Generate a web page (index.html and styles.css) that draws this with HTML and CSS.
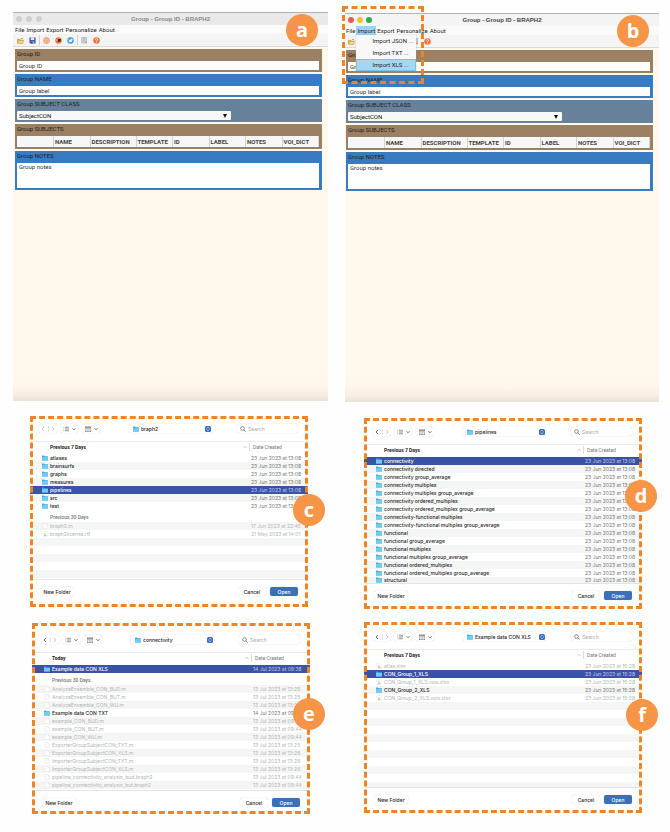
FILE: index.html
```html
<!DOCTYPE html>
<html lang="en">
<head>
<meta charset="utf-8">
<title>Group - Group ID - BRAPH2</title>
<link rel="stylesheet" href="styles.css">
</head>
<body>
<svg class="defs" aria-hidden="true">
  <symbol id="folder" viewBox="0 0 12 12"><path d="M0 2.2Q0 1 1.2 1H4l1.2 1.4h5.6q1.2 0 1.2 1.2V10q0 1-1 1H1q-1 0-1-1z" fill="#41a9dd"/><path d="M0 4h12v6q0 1-1 1H1q-1 0-1-1z" fill="#6dccf5"/></symbol>
  <symbol id="file" viewBox="0 0 12 12"><path d="M2 .5h5.500l3 3v8H2z" fill="#fff" stroke="#dedede"/><path d="M7.500.5v3h3" fill="none" stroke="#dedede"/></symbol>
  <symbol id="sheet" viewBox="0 0 12 12"><path d="M2 .5h5.500l3 3v8H2z" fill="#fff" stroke="#e2e2e2"/><path d="M4 5h4v2H4z" fill="#e0b868"/><path d="M4 8h5v2H4z" fill="#b7c8b2"/></symbol>
  <symbol id="back" viewBox="0 0 10 12"><path d="M7 2 3 6l4 4" fill="none" stroke="currentColor" stroke-width="1.600"/></symbol>
  <symbol id="forward" viewBox="0 0 10 12"><path d="m3 2 4 4-4 4" fill="none" stroke="currentColor" stroke-width="1.600"/></symbol>
  <symbol id="list" viewBox="0 0 12 12"><path d="M1 2.500h1.500M4 2.500h8M1 6h1.500M4 6h8M1 9.500h1.500M4 9.500h8" stroke="#666" stroke-width="1.400"/></symbol>
  <symbol id="tiles" viewBox="0 0 12 12"><path d="M0 1h12v4H0zM0 7h3v2H0zm4.500 0h3v2h-3zM9 7h3v2H9zM0 10h3v2H0zm4.500 0h3v2h-3zM9 10h3v2H9z" fill="#858585"/><path d="M4 1v4m4-4v4" stroke="#ccc"/></symbol>
  <symbol id="down" viewBox="0 0 8 8"><path d="m1 2.500 3 3 3-3" fill="none" stroke="#444" stroke-width="1.600"/></symbol>
  <symbol id="updown" viewBox="0 0 12 12"><rect width="12" height="12" rx="3" fill="#3c6fc0"/><path d="m3.500 5 2.500-2.500L8.500 5m-5 2L6 9.500 8.500 7" fill="none" stroke="#fff" stroke-width="1.300"/></symbol>
  <symbol id="lens" viewBox="0 0 12 12"><circle cx="5" cy="5" r="3.700" fill="none" stroke="#555" stroke-width="1.300"/><path d="m7.700 7.700 3.500 3.500" stroke="#555" stroke-width="1.500"/></symbol>
  <symbol id="up" viewBox="0 0 8 8"><path d="m1 5.500 3-3 3 3" fill="none" stroke="#888"/></symbol>
  <symbol id="open" viewBox="0 0 16 16"><path d="M1 5h5l1 2h6v7H1z" fill="#e0b63c" stroke="#a88220"/><path d="m1 14 3-6h11l-2 6z" fill="#fbe48a" stroke="#b08c28"/><path d="M9 4q3-3 5 1" fill="none" stroke="#667" stroke-width="1.300"/></symbol>
  <symbol id="save" viewBox="0 0 16 16"><path d="M1 1h14v14H3l-2-2z" fill="#4350a8"/><path d="M4 1h8v6H4z" fill="#e8eefc"/><path d="M4 10h8v5H4z" fill="#a9b0c4"/><path d="M5 11h3v4H5z" fill="#222a60"/></symbol>
  <symbol id="globe" viewBox="0 0 16 16"><circle cx="8" cy="8" r="7" fill="#fbd9c4" stroke="#ee8f5c" stroke-width="1.600"/><path d="M1 8h14M8 1v14M2.500 4.500h11m-11 7h11M8 1Q1 8 8 15M8 1q7 7 0 14" fill="none" stroke="#ee8f5c"/></symbol>
  <symbol id="forum" viewBox="0 0 16 16"><circle cx="8" cy="8" r="7.500" fill="#ee7c3a"/><path d="M7 4.500h6V10H9l-3 2V7z" fill="#4a2013"/><circle cx="5" cy="7" r="1.500" fill="#ffd9bd"/></symbol>
  <symbol id="bird" viewBox="0 0 16 16"><circle cx="8" cy="8" r="7.500" fill="#3a9be0"/><path d="M3 4.500q2 2.500 5 2.500.2-3 2.500-3 1 0 1.500.8l1.200-.5-.7 1.500q0 6-5.500 6-2.500 0-4-1.200 2 0 3-1-2-.5-2.300-2z" fill="#fff"/></symbol>
  <symbol id="notes" viewBox="0 0 16 16"><path d="M1.500 1h11v13h-11z" fill="#dcdce2" stroke="#85828c"/><path d="M4 4h6M4 7h6M4 10h4" stroke="#8c8290"/><path d="m9 10 5 1-2 4z" fill="#ee7c3a"/></symbol>
  <symbol id="help" viewBox="0 0 16 16"><circle cx="8" cy="8" r="7.500" fill="#ee7440"/><path d="M5.500 6q0-2.500 2.500-2.500T10.500 6Q10.500 7.500 8 8.500V10m0 1.200V13" fill="none" stroke="#fff" stroke-width="1.600"/></symbol>
</svg>

<main class="sheet">
<div class="column">

<section class="window window-a" aria-label="Group editor">
  <header class="titlebar inactive"><span class="lights"><i></i><i></i><i></i></span><h1>Group - Group ID - BRAPH2</h1></header>
  <nav class="menubar"><button>File</button><button>Import</button><button>Export</button><button>Personalize</button><button>About</button></nav>
  <div class="toolbar">
    <button aria-label="Open"><svg><use href="#open"/></svg></button><button aria-label="Save"><svg><use href="#save"/></svg></button><hr>
    <button aria-label="Website"><svg><use href="#globe"/></svg></button><button aria-label="Forum"><svg><use href="#forum"/></svg></button><button aria-label="Twitter"><svg><use href="#bird"/></svg></button><hr>
    <button aria-label="License"><svg><use href="#notes"/></svg></button><button aria-label="Help"><svg><use href="#help"/></svg></button>
  </div>
  <div class="panels">
    <div class="panel brown"><label for="a-id">Group ID</label><input id="a-id" value="Group ID"></div>
    <div class="panel blue"><label for="a-name">Group NAME</label><input id="a-name" value="Group label"></div>
    <div class="panel slate"><label for="a-class">Group SUBJECT CLASS</label><div class="select"><select id="a-class"><option>SubjectCON</option></select></div></div>
    <div class="panel brown"><span class="label">Group SUBJECTS</span>
      <table class="subjects"><colgroup><col><col><col class="wide"><col><col><col><col><col></colgroup><thead><tr><th></th><th>NAME</th><th>DESCRIPTION</th><th>TEMPLATE</th><th>ID</th><th>LABEL</th><th>NOTES</th><th>VOI_DICT</th></tr></thead></table></div>
    <div class="panel blue"><label for="a-notes">Group NOTES</label><textarea id="a-notes">Group notes</textarea></div>
  </div>
  <span class="badge badge-window">a</span>
</section>

<section class="dialog dialog-c" aria-label="Choose folder in braph2">
  <div class="bar">
    <div class="control nav"><button class="off" aria-label="Back"><svg><use href="#back"/></svg></button><button class="off" aria-label="Forward"><svg><use href="#forward"/></svg></button></div>
    <button class="control view" aria-label="List view"><svg><use href="#list"/></svg><svg class="small"><use href="#down"/></svg></button>
    <button class="control view" aria-label="Group by"><svg><use href="#tiles"/></svg><svg class="small"><use href="#down"/></svg></button>
    <div class="control place"><svg><use href="#folder"/></svg><select aria-label="Location"><option>braph2</option></select><svg><use href="#updown"/></svg></div>
    <div class="control search"><svg><use href="#lens"/></svg><input type="search" placeholder="Search" aria-label="Search"></div>
  </div>
  <div class="files">
    <table>
      <thead><tr><th>Previous 7 Days<svg><use href="#up"/></svg></th><th><span>Date Created</span></th></tr></thead>
      <tbody>
      <tr><td><svg><use href="#folder"/></svg>atlases</td><td>23 Jun 2023 at 13:08</td></tr>
      <tr class="alt"><td><svg><use href="#folder"/></svg>brainsurfs</td><td>23 Jun 2023 at 13:08</td></tr>
      <tr><td><svg><use href="#folder"/></svg>graphs</td><td>23 Jun 2023 at 13:08</td></tr>
      <tr class="alt"><td><svg><use href="#folder"/></svg>measures</td><td>23 Jun 2023 at 13:08</td></tr>
      <tr class="selected"><td><svg><use href="#folder"/></svg>pipelines</td><td>23 Jun 2023 at 13:08</td></tr>
      <tr class="alt"><td><svg><use href="#folder"/></svg>src</td><td>23 Jun 2023 at 13:08</td></tr>
      <tr><td><svg><use href="#folder"/></svg>test</td><td>23 Jun 2023 at 13:08</td></tr>
      <tr class="group"><th colspan="2">Previous 30 Days</th></tr>
      <tr class="alt dim"><td><svg><use href="#file"/></svg>braph2.m</td><td>17 Jun 2023 at 22:45</td></tr>
      <tr class="dim"><td><svg><use href="#sheet"/></svg>braph2license.rtf</td><td>21 May 2023 at 14:01</td></tr>
      </tbody>
    </table>
    <div class="empty"></div>
  </div>
  <div class="actions"><button class="control new">New Folder</button><button class="control">Cancel</button><button class="control primary">Open</button></div>
  <span class="badge badge-c">c</span>
</section>

<section class="dialog dialog-e" aria-label="Choose folder in connectivity">
  <div class="bar">
    <div class="control nav"><button aria-label="Back"><svg><use href="#back"/></svg></button><button class="off" aria-label="Forward"><svg><use href="#forward"/></svg></button></div>
    <button class="control view" aria-label="List view"><svg><use href="#list"/></svg><svg class="small"><use href="#down"/></svg></button>
    <button class="control view" aria-label="Group by"><svg><use href="#tiles"/></svg><svg class="small"><use href="#down"/></svg></button>
    <div class="control place"><svg><use href="#folder"/></svg><select aria-label="Location"><option>connectivity</option></select><svg><use href="#updown"/></svg></div>
    <div class="control search"><svg><use href="#lens"/></svg><input type="search" placeholder="Search" aria-label="Search"></div>
  </div>
  <div class="files">
    <table>
      <thead><tr><th>Today<svg><use href="#up"/></svg></th><th><span>Date Created</span></th></tr></thead>
      <tbody>
      <tr class="selected"><td><svg><use href="#folder"/></svg>Example data CON XLS</td><td>14 Jul 2023 at 09:38</td></tr>
      <tr class="group"><th colspan="2">Previous 30 Days</th></tr>
      <tr class="alt dim"><td><svg><use href="#file"/></svg>AnalyzeEnsemble_CON_BUD.m</td><td>13 Jul 2023 at 13:25</td></tr>
      <tr class="dim"><td><svg><use href="#file"/></svg>AnalyzeEnsemble_CON_BUT.m</td><td>13 Jul 2023 at 13:25</td></tr>
      <tr class="alt dim"><td><svg><use href="#file"/></svg>AnalyzeEnsemble_CON_WU.m</td><td>13 Jul 2023 at 13:25</td></tr>
      <tr><td><svg><use href="#folder"/></svg>Example data CON TXT</td><td>14 Jul 2023 at 09:38</td></tr>
      <tr class="alt dim"><td><svg><use href="#file"/></svg>example_CON_BUD.m</td><td>13 Jul 2023 at 09:44</td></tr>
      <tr class="dim"><td><svg><use href="#file"/></svg>example_CON_BUT.m</td><td>13 Jul 2023 at 09:44</td></tr>
      <tr class="alt dim"><td><svg><use href="#file"/></svg>example_CON_WU.m</td><td>13 Jul 2023 at 09:44</td></tr>
      <tr class="dim"><td><svg><use href="#file"/></svg>ExporterGroupSubjectCON_TXT.m</td><td>13 Jul 2023 at 13:25</td></tr>
      <tr class="alt dim"><td><svg><use href="#file"/></svg>ExporterGroupSubjectCON_XLS.m</td><td>13 Jul 2023 at 13:26</td></tr>
      <tr class="dim"><td><svg><use href="#file"/></svg>ImporterGroupSubjectCON_TXT.m</td><td>13 Jul 2023 at 13:26</td></tr>
      <tr class="alt dim"><td><svg><use href="#file"/></svg>ImporterGroupSubjectCON_XLS.m</td><td>13 Jul 2023 at 13:26</td></tr>
      <tr class="dim"><td><svg><use href="#file"/></svg>pipeline_connectivity_analysis_bud.braph2</td><td>13 Jul 2023 at 09:44</td></tr>
      <tr class="alt dim"><td><svg><use href="#file"/></svg>pipeline_connectivity_analysis_but.braph2</td><td>13 Jul 2023 at 09:44</td></tr>
      </tbody>
    </table>
  </div>
  <div class="actions"><button class="control new">New Folder</button><button class="control">Cancel</button><button class="control primary">Open</button></div>
  <span class="badge badge-e">e</span>
</section>
</div>

<div class="column">
<section class="window window-b" aria-label="Group editor with import menu">
  <header class="titlebar"><span class="lights"><i></i><i></i><i></i></span><h1>Group - Group ID - BRAPH2</h1></header>
  <nav class="menubar"><button>File</button><div class="menu"><button class="active">Import</button>
    <div class="dropdown"><button>Import JSON ...</button><button>Import TXT ...</button><button class="active">Import XLS ...</button></div></div><button>Export</button><button>Personalize</button><button>About</button></nav>
  <div class="toolbar">
    <button aria-label="Open"><svg><use href="#open"/></svg></button><button aria-label="Save"><svg><use href="#save"/></svg></button><hr>
    <button aria-label="Website"><svg><use href="#globe"/></svg></button><button aria-label="Forum"><svg><use href="#forum"/></svg></button><button aria-label="Twitter"><svg><use href="#bird"/></svg></button><hr>
    <button aria-label="License"><svg><use href="#notes"/></svg></button><button aria-label="Help"><svg><use href="#help"/></svg></button>
  </div>
  <div class="panels">
    <div class="panel brown"><label for="b-id">Group ID</label><input id="b-id" value="Group ID"></div>
    <div class="panel blue"><label for="b-name">Group NAME</label><input id="b-name" value="Group label"></div>
    <div class="panel slate"><label for="b-class">Group SUBJECT CLASS</label><div class="select"><select id="b-class"><option>SubjectCON</option></select></div></div>
    <div class="panel brown"><span class="label">Group SUBJECTS</span>
      <table class="subjects"><colgroup><col><col><col class="wide"><col><col><col><col><col></colgroup><thead><tr><th></th><th>NAME</th><th>DESCRIPTION</th><th>TEMPLATE</th><th>ID</th><th>LABEL</th><th>NOTES</th><th>VOI_DICT</th></tr></thead></table></div>
    <div class="panel blue"><label for="b-notes">Group NOTES</label><textarea id="b-notes">Group notes</textarea></div>
  </div>
  <div class="callout"></div>
  <span class="badge badge-window">b</span>
</section>

<section class="dialog dialog-d" aria-label="Choose folder in pipelines">
  <div class="bar">
    <div class="control nav"><button aria-label="Back"><svg><use href="#back"/></svg></button><button class="off" aria-label="Forward"><svg><use href="#forward"/></svg></button></div>
    <button class="control view" aria-label="List view"><svg><use href="#list"/></svg><svg class="small"><use href="#down"/></svg></button>
    <button class="control view" aria-label="Group by"><svg><use href="#tiles"/></svg><svg class="small"><use href="#down"/></svg></button>
    <div class="control place"><svg><use href="#folder"/></svg><select aria-label="Location"><option>pipelines</option></select><svg><use href="#updown"/></svg></div>
    <div class="control search"><svg><use href="#lens"/></svg><input type="search" placeholder="Search" aria-label="Search"></div>
  </div>
  <div class="files full">
    <table>
      <thead><tr><th>Previous 7 Days<svg><use href="#up"/></svg></th><th><span>Date Created</span></th></tr></thead>
      <tbody>
      <tr class="selected"><td><svg><use href="#folder"/></svg>connectivity</td><td>23 Jun 2023 at 13:08</td></tr>
      <tr class="alt"><td><svg><use href="#folder"/></svg>connectivity directed</td><td>23 Jun 2023 at 13:08</td></tr>
      <tr><td><svg><use href="#folder"/></svg>connectivity group_average</td><td>23 Jun 2023 at 13:08</td></tr>
      <tr class="alt"><td><svg><use href="#folder"/></svg>connectivity multiplex</td><td>23 Jun 2023 at 13:08</td></tr>
      <tr><td><svg><use href="#folder"/></svg>connectivity multiplex group_average</td><td>23 Jun 2023 at 13:08</td></tr>
      <tr class="alt"><td><svg><use href="#folder"/></svg>connectivity ordered_multiplex</td><td>23 Jun 2023 at 13:08</td></tr>
      <tr><td><svg><use href="#folder"/></svg>connectivity ordered_multiplex group_average</td><td>23 Jun 2023 at 13:08</td></tr>
      <tr class="alt"><td><svg><use href="#folder"/></svg>connectivity-functional multiplex</td><td>23 Jun 2023 at 13:08</td></tr>
      <tr><td><svg><use href="#folder"/></svg>connectivity-functional multiplex group_average</td><td>23 Jun 2023 at 13:08</td></tr>
      <tr class="alt"><td><svg><use href="#folder"/></svg>functional</td><td>23 Jun 2023 at 13:08</td></tr>
      <tr><td><svg><use href="#folder"/></svg>functional group_average</td><td>23 Jun 2023 at 13:08</td></tr>
      <tr class="alt"><td><svg><use href="#folder"/></svg>functional multiplex</td><td>23 Jun 2023 at 13:08</td></tr>
      <tr><td><svg><use href="#folder"/></svg>functional multiplex group_average</td><td>23 Jun 2023 at 13:08</td></tr>
      <tr class="alt"><td><svg><use href="#folder"/></svg>functional ordered_multiplex</td><td>23 Jun 2023 at 13:08</td></tr>
      <tr><td><svg><use href="#folder"/></svg>functional ordered_multiplex group_average</td><td>23 Jun 2023 at 13:08</td></tr>
      <tr class="alt"><td><svg><use href="#folder"/></svg>structural</td><td>23 Jun 2023 at 13:08</td></tr>
      </tbody>
    </table>
  </div>
  <div class="actions"><button class="control new">New Folder</button><button class="control">Cancel</button><button class="control primary">Open</button></div>
  <span class="badge badge-d">d</span>
</section>

<section class="dialog dialog-f" aria-label="Choose folder in Example data CON XLS">
  <div class="bar">
    <div class="control nav"><button aria-label="Back"><svg><use href="#back"/></svg></button><button class="off" aria-label="Forward"><svg><use href="#forward"/></svg></button></div>
    <button class="control view" aria-label="List view"><svg><use href="#list"/></svg><svg class="small"><use href="#down"/></svg></button>
    <button class="control view" aria-label="Group by"><svg><use href="#tiles"/></svg><svg class="small"><use href="#down"/></svg></button>
    <div class="control place"><svg><use href="#folder"/></svg><select aria-label="Location"><option>Example data CON XLS</option></select><svg><use href="#updown"/></svg></div>
    <div class="control search"><svg><use href="#lens"/></svg><input type="search" placeholder="Search" aria-label="Search"></div>
  </div>
  <div class="files">
    <table>
      <thead><tr><th>Previous 7 Days<svg><use href="#up"/></svg></th><th><span>Date Created</span></th></tr></thead>
      <tbody>
      <tr class="dim"><td><svg><use href="#sheet"/></svg>atlas.xlsx</td><td>23 Jun 2023 at 15:28</td></tr>
      <tr class="selected"><td><svg><use href="#folder"/></svg>CON_Group_1_XLS</td><td>23 Jun 2023 at 15:28</td></tr>
      <tr class="dim"><td><svg><use href="#sheet"/></svg>CON_Group_1_XLS.vois.xlsx</td><td>23 Jun 2023 at 15:28</td></tr>
      <tr class="alt"><td><svg><use href="#folder"/></svg>CON_Group_2_XLS</td><td>23 Jun 2023 at 15:28</td></tr>
      <tr class="dim"><td><svg><use href="#sheet"/></svg>CON_Group_2_XLS.vois.xlsx</td><td>23 Jun 2023 at 15:28</td></tr>
      </tbody>
    </table>
    <div class="empty"></div>
  </div>
  <div class="actions"><button class="control new">New Folder</button><button class="control">Cancel</button><button class="control primary">Open</button></div>
  <span class="badge badge-f">f</span>
</section>
</div>
</main>
</body>
</html>
```
FILE: styles.css
```css
* { box-sizing: border-box; }
body { margin: 0; background: #fefefe; font: 5px/8px Inter, "Liberation Sans", sans-serif; color: #222; }
button, input, select, textarea { font: inherit; color: inherit; margin: 0; padding: 0; border: 0; border-radius: 0; background: none; outline: 0; appearance: none; min-width: 0; }
svg { display: block; flex: none; width: 7px; height: 7px; }
.defs { position: absolute; width: 0; height: 0; }
.sheet { display: grid; grid-template-columns: 1fr 1fr; padding-bottom: 16px; }
.column { min-width: 0; }

/* Editor windows */
.window { position: relative; display: flex; flex-direction: column; min-height: 389px; font: 6px/8px Roboto, "Liberation Sans", sans-serif; background: linear-gradient(to top, #e9e2d6, #f6eee2 6px, #fef6ea 14px, #fef9ec 26px); }
.window-a { margin: 12px 7px 0 13px; --inset: 2px; }
.window-b { margin: 13px 11px 0 10px; --inset: 1px; }
.titlebar { display: grid; grid-template-columns: 1fr auto 1fr; align-items: center; height: 13px; padding: 0 3px; background: #f4f4f4; border-top: 1px solid #aab4c0; }
.titlebar.inactive { background: #e9e9e9; color: #888; }
.titlebar h1 { margin: 0; font: bold 6px/12px "Liberation Sans", sans-serif; }
.titlebar:not(.inactive) h1 { color: #444; }
.lights { display: flex; gap: 3px; }
.inactive .lights { gap: 4px; }
.lights i { width: 6px; height: 6px; border-radius: 50%; background: #d0d0d0; }
.titlebar:not(.inactive) i:nth-child(1) { background: #ee5b54; }
.titlebar:not(.inactive) i:nth-child(2) { background: #f8bd33; }
.titlebar:not(.inactive) i:nth-child(3) { background: #35a94a; }
.menubar { display: flex; height: 9px; padding-left: calc(var(--inset) - 1px); background: #fbfbfb; }
.menubar button { padding: 0 1px; line-height: 9px; white-space: nowrap; }
.menu { position: relative; }
.menu > .active { background: #9bd3f7; }
.dropdown { position: absolute; z-index: 2; top: 9px; left: 0; width: 60px; background: #f8f8f8; box-shadow: 0 0 1px #999; }
.menubar .dropdown button { display: block; width: 100%; padding-left: 16px; line-height: 12px; text-align: left; }
.menubar .dropdown .active { background: #a1d7f8; box-shadow: inset 0 0 0 1px #7fc0ea; }
.toolbar { display: flex; align-items: center; gap: 5px; height: 13px; padding-left: calc(var(--inset) + 2px); background: #f4f4f4; border-bottom: 1px solid #d9d9d9; }
.toolbar hr { width: 1px; height: 10px; margin: 0 -2px; border: 0; background: #d2d2d2; }
.panels { display: grid; gap: 2px; padding: 2px 6px 0 var(--inset); }
.panel { padding: 0 3px 2px 2px; }
.panel > * { display: block; }
.panel label, .label { height: 12px; line-height: 9px; color: #241d18; }
.brown { background: #9b8064; }
.blue { background: #387bc0; }
.slate { background: #668199; }
.panel input, .panel textarea { width: 100%; height: 9px; padding: 0 2px; background: #fff; color: #333; }
.panel textarea { height: 25px; resize: none; overflow: hidden; }
.select { position: relative; width: 71%; background: #f8f8f8; border-radius: 1px; }
.select select { display: block; width: 100%; height: 9px; padding-left: 2px; color: #111; }
.select::after { content: ""; position: absolute; right: 4px; top: 3px; border: 2px solid transparent; border-top: 4px solid #111; border-bottom: 0; }
.subjects { display: table; width: 100%; table-layout: fixed; border-collapse: collapse; background: #f7f7f7; }
.subjects .wide { width: 46px; }
.subjects th { height: 11px; padding: 0 0 0 1px; border-right: 1px solid #d4d4d4; font-weight: bold; text-align: left; color: #444; }

/* Annotations */
.callout { position: absolute; top: -7px; left: -3px; width: 82px; height: 78px; border: 3px dashed #f08424; z-index: 3; }
.badge { position: absolute; z-index: 4; width: 32px; height: 32px; border-radius: 50%; background: #f69545; color: #fff; font: bold 20px/31px "Open Sans", sans-serif; text-align: center; }
.badge-window { top: 2px; right: 10px; }
.badge-c { top: 78px; right: -17px; }
.badge-d { top: 62px; right: -15px; }
.badge-e { top: 75px; right: -15px; }
.badge-f { top: 77px; right: -16px; }

/* File dialogs */
.dialog { position: relative; background: #fff; }
.dialog::after { content: ""; position: absolute; inset: 0; border: 3px dashed #f08424; pointer-events: none; }
.dialog-c { margin: 15px 27px 0 30px; padding-bottom: 4px; }
.dialog-e { margin: 16px 25px 0 32px; padding-top: 4px; }
.dialog-d { margin: 16px 28px 0 29px; padding: 1px 0 2px; }
.dialog-f { margin: 13px 28px 0 29px; padding: 2px 0; }
.bar { display: flex; align-items: center; height: 25px; padding: 0 10px 0 9px; }
.control { display: flex; align-items: center; height: 9px; border-radius: 2px; background: #fff; box-shadow: 0 0 1px #bbb; }
.bar svg { width: 6px; height: 6px; }
.nav { width: 18px; margin-right: 3px; color: #555; }
.nav button { flex: 1; display: flex; justify-content: center; }
.nav button + button { border-left: 1px solid #e4e4e4; }
.nav .off { color: #bbb; }
.view { justify-content: center; gap: 3px; width: 18px; margin-right: 4px; }
.bar .small { width: 4px; height: 4px; }
.place { width: 83px; margin: 0 auto; padding: 0 1px 0 4px; gap: 2px; }
.place select { flex: 1; font-weight: 500; }
.search { width: 61px; padding-left: 3px; gap: 2px; }
.search input { flex: 1; width: 0; }
.search input::placeholder { color: #aaa; opacity: 1; }
.files { display: flex; flex-direction: column; height: 139px; overflow: hidden; border-bottom: 1px solid #e4e4e4; }
.files table { width: 100%; table-layout: fixed; border-collapse: separate; border-spacing: 0; }
.files th, .files td { height: 8px; padding: 0; text-align: left; white-space: nowrap; }
.files td svg { display: inline-block; width: 6px; height: 6px; margin: 1px 2px 1px 12px; vertical-align: top; }
.files td { font-weight: 500; line-height: 8px; vertical-align: top; }
.files td + td { font-weight: 400; color: #777; }
.files thead th { height: 13px; padding: 0 0 2px 20px; font: bold 5px/8px Roboto, sans-serif; border-top: 1px solid #ececec; }
.files thead th + th { width: 57px; padding-left: 0; font-weight: 400; color: #777; }
.files thead span { display: block; margin-left: -2px; padding-left: 3px; border-left: 1px solid #ddd; }
.files thead svg { float: right; width: 4px; height: 4px; margin: 2px 4px 0 0; }
.files .alt { background: #f4f5f5; }
.files .selected { background: #3a53a4; }
.files .selected td { color: #fff; }
.files .selected td + td { color: #c3cbe6; }
.files .dim td { color: #b5b5b5; font-weight: 400; }
.files .group th { height: 12px; padding: 1px 0 0 20px; font: 500 5px/8px Roboto, sans-serif; color: #777; }
.files.full { height: 140px; }
.full tr:last-child td { height: 6px; line-height: 6px; }
.full tr:last-child td svg { margin-top: 0; margin-bottom: 0; }
.empty { flex: 1; background: repeating-linear-gradient(#f4f5f5 0 8px, #fff 8px 16px); }
.actions { display: flex; align-items: center; gap: 4px; height: 23px; padding: 0 10px; }
.actions button { justify-content: center; width: 28px; font-weight: 500; }
.actions .new { width: 34px; margin-right: auto; }
.actions .primary { background: #3c6fba; color: #fff; }
```
